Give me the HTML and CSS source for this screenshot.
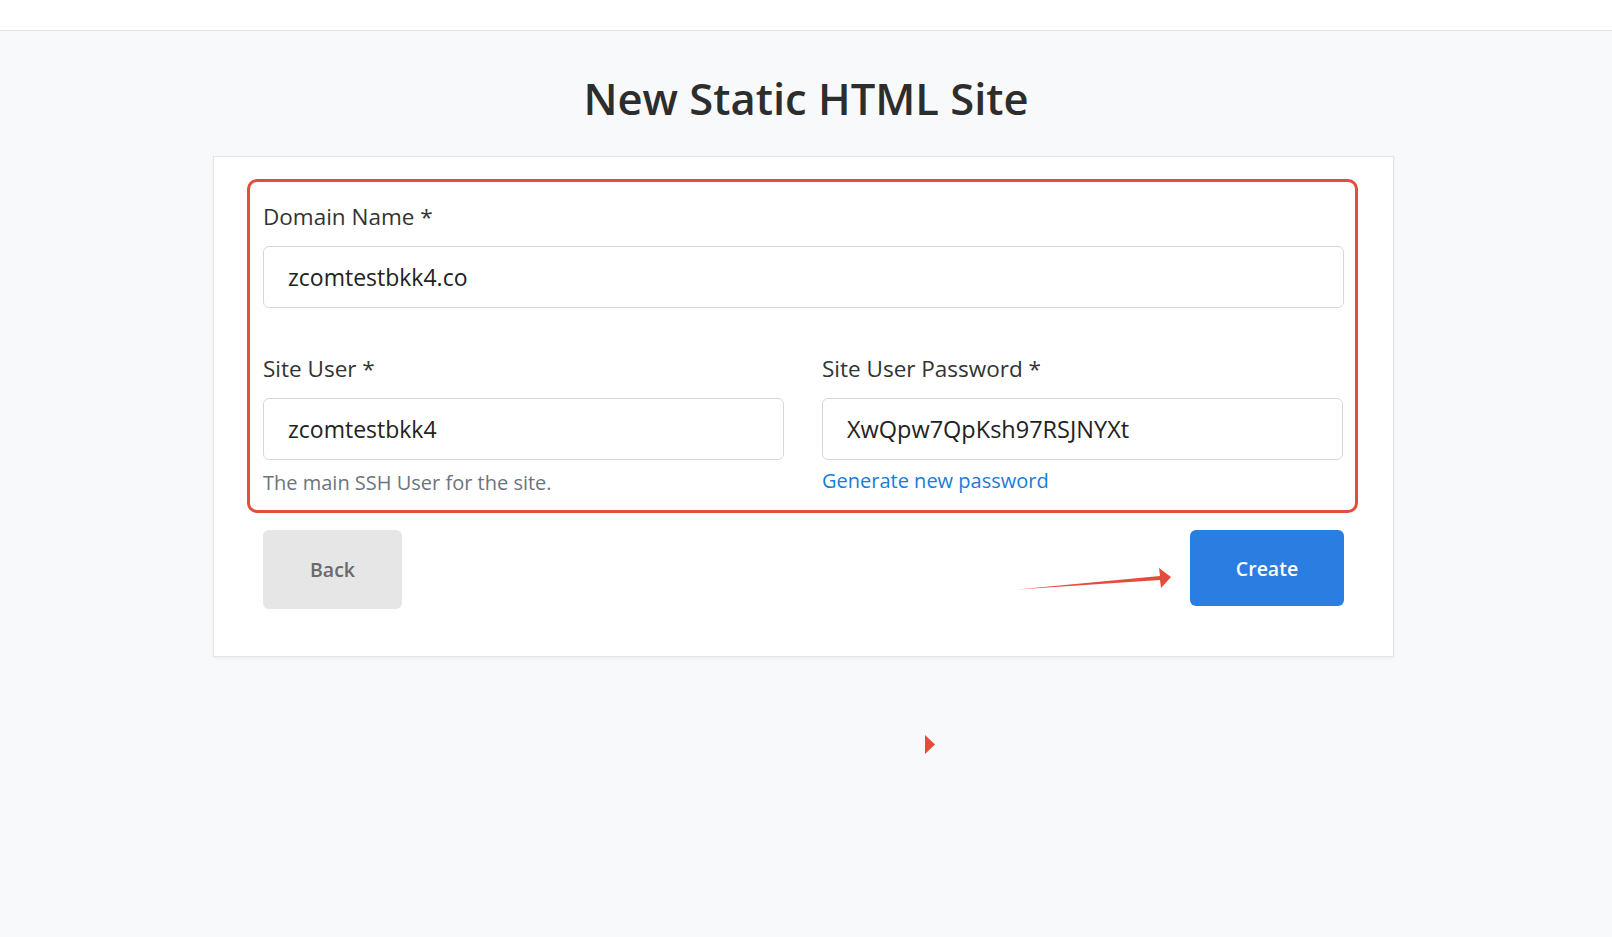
FILE: index.html
```html
<!DOCTYPE html>
<html lang="en">
<head>
<meta charset="utf-8">
<title>New Static HTML Site</title>
<link rel="stylesheet" href="styles.css">
</head>
<body>
<header class="topbar"></header>
<main class="page">
  <h1 class="title">New Static HTML Site</h1>
  <section class="card">
    <div class="field">
      <label class="label">Domain Name *</label>
      <input class="input" type="text" value="zcomtestbkk4.co">
    </div>
    <div class="row">
      <div class="field col">
        <label class="label">Site User *</label>
        <input class="input" type="text" value="zcomtestbkk4">
        <div class="help">The main SSH User for the site.</div>
      </div>
      <div class="field col">
        <label class="label">Site User Password *</label>
        <input class="input input-pass" type="text" value="XwQpw7QpKsh97RSJNYXt">
        <a class="link" href="#">Generate new password</a>
      </div>
    </div>
    <div class="actions">
      <button class="btn btn-back" type="button">Back</button>
      <button class="btn btn-create" type="button">Create</button>
    </div>
    <div class="highlight"></div>
    <svg class="arrow" width="162" height="32" viewBox="0 0 162 32"><polygon points="3,27.5 146,14 145,6 157,15 147,26 146,18" fill="#e34d3b"/></svg>
  </section>
  <svg class="marker" width="10" height="19" viewBox="0 0 10 19"><polygon points="0,0 10,9.5 0,19" fill="#e34d3b"/></svg>
</main>
</body>
</html>
```
FILE: styles.css
```css
* { box-sizing: border-box; }
html, body { margin: 0; padding: 0; }
body {
  background: #f8f9fb;
  font-family: "Open Sans", "Noto Sans", sans-serif;
  color: #333;
  height: 937px;
  overflow: hidden;
}
.topbar {
  height: 31px;
  background: #fff;
  border-bottom: 1px solid #e3e4e6;
}
.page {
  position: relative;
  padding-top: 38px;
}
.title {
  margin: 0;
  text-align: center;
  font-size: 43.5px;
  line-height: 60px;
  font-weight: 600;
  color: #2d2d2d;
}
.card {
  position: relative;
  width: 1181px;
  margin: 27px 0 0 calc(50% - 593px);
  background: #fff;
  border: 1px solid #e4e5e7;
  box-shadow: 0 1px 3px rgba(0,0,0,0.06);
  padding: 45px 49px 47px;
}
.field { display: flex; flex-direction: column; }
.label {
  font-size: 22.5px;
  line-height: 30px;
  color: #333;
}
.input {
  margin-top: 14px;
  height: 62px;
  border: 1px solid #d4d8dd;
  border-radius: 6px;
  padding: 0 24px;
  font-family: inherit;
  font-size: 23px;
  color: #222;
  background: #fff;
  outline: none;
  width: 100%;
}
.input-pass { font-size: 23.5px; }
.row {
  display: grid;
  grid-template-columns: 521px 521px;
  column-gap: 38px;
  margin-top: 46px;
}
.help {
  margin-top: 10px;
  font-size: 20px;
  line-height: 26px;
  color: #6c757d;
}
.link {
  margin-top: 8px;
  font-size: 20px;
  line-height: 26px;
  color: #1a7bd8;
  text-decoration: none;
}
.actions {
  display: flex;
  justify-content: space-between;
  align-items: flex-start;
  margin-top: 34px;
}
.btn {
  border: 0;
  border-radius: 6px;
  font-family: inherit;
  font-size: 19.5px;
  font-weight: 600;
  cursor: pointer;
}
.btn-back {
  width: 139px;
  height: 79px;
  background: #e6e6e6;
  color: #6a6a6a;
}
.btn-create {
  width: 154px;
  height: 76px;
  background: #2a7de1;
  color: #fff;
}
.highlight {
  position: absolute;
  left: 33px;
  top: 22px;
  width: 1111px;
  height: 334px;
  border: 3px solid #e34d3b;
  border-radius: 10px;
  pointer-events: none;
}
.arrow {
  position: absolute;
  left: 800px;
  top: 405px;
}
.marker {
  position: absolute;
  left: 925px;
  top: 704px;
}
```
